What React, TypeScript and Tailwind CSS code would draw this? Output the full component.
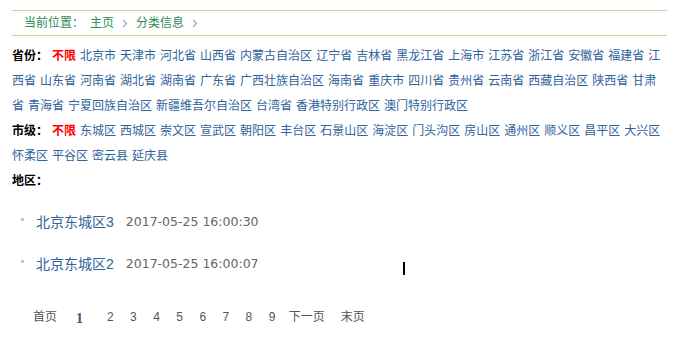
import React from 'react'

const provinces = [
  '北京市', '天津市', '河北省', '山西省', '内蒙古自治区', '辽宁省', '吉林省', '黑龙江省', '上海市', '江苏省',
  '浙江省', '安徽省', '福建省', '江西省', '山东省', '河南省', '湖北省', '湖南省', '广东省', '广西壮族自治区',
  '海南省', '重庆市', '四川省', '贵州省', '云南省', '西藏自治区', '陕西省', '甘肃省', '青海省', '宁夏回族自治区',
  '新疆维吾尔自治区', '台湾省', '香港特别行政区', '澳门特别行政区',
]

const districts = [
  '东城区', '西城区', '崇文区', '宣武区', '朝阳区', '丰台区', '石景山区', '海淀区', '门头沟区', '房山区',
  '通州区', '顺义区', '昌平区', '大兴区', '怀柔区', '平谷区', '密云县', '延庆县',
]

const posts = [
  { title: '北京东城区3', time: '2017-05-25 16:00:30' },
  { title: '北京东城区2', time: '2017-05-25 16:00:07' },
]

const Chevron = () => (
  <svg width="6" height="9" viewBox="0 0 6 9" className="mx-[8px] inline-block">
    <polyline points="1,1 4.5,4.5 1,8" fill="none" stroke="#9db0c8" strokeWidth="1.4" />
  </svg>
)

// 省份 / 市级 这种筛选行
const FilterRow = (props: { label: string; items?: string[] }) => (
  <div className="leading-[25px] text-[12px]">
    <span className="mr-[4px] font-bold text-black">{props.label}：</span>
    {props.items && <span className="mr-[4px] font-bold text-[#ff0000]">不限</span>}
    {props.items?.map((item) => (
      <a href="#" key={item} className="mr-[4px] text-[#2f639c]">
        {item}
      </a>
    ))}
  </div>
)

export default function App() {
  return (
    <div className="relative h-[350px] w-[673px] bg-white font-['Liberation_Sans','Noto_Sans_CJK_SC',sans-serif]">
      <div className="ml-[12px] w-[655px] pt-[10px]">
        <div className="flex h-[26px] items-center border-y border-[#cfcf96] pl-[12px] text-[12px] text-[#2b8c54]">
          <span>当前位置：</span>
          <a href="#" className="ml-[6px]">主页</a>
          <Chevron />
          <a href="#">分类信息</a>
          <Chevron />
        </div>

        <div className="pt-[7.5px]">
          <FilterRow label="省份" items={provinces} />
          <FilterRow label="市级" items={districts} />
          <FilterRow label="地区" />
        </div>

        <ul className="mt-[8px]">
          {posts.map((post) => (
            <li key={post.title} className="flex h-[42px] items-center pl-[9px]">
              <span className="mb-[6px] h-[3px] w-[3px] bg-[#c8c8c8]" />
              <a href="#" className="ml-[12px] text-[14px] text-[#2f639c]">{post.title}</a>
              <span className="ml-[12px] font-['DejaVu_Sans',sans-serif] text-[12.5px] text-[#666]">{post.time}</span>
            </li>
          ))}
        </ul>

        <div className="mt-[19px] flex h-[24px] items-center text-[12px] text-[#555]">
          <a href="#" className="ml-[21px]">首页</a>
          <span className="ml-[19px] mt-[3px] font-['Liberation_Serif',serif] text-[14px] font-bold">1</span>
          <div className="ml-[24px] flex">
            {['2', '3', '4', '5', '6', '7', '8', '9'].map((n) => (
              <a href="#" key={n} className="w-[23.1px]">{n}</a>
            ))}
          </div>
          <a href="#" className="ml-[-3px]">下一页</a>
          <a href="#" className="ml-[16px]">末页</a>
        </div>
      </div>

      {/* text cursor */}
      <div className="absolute left-[403px] top-[262px] h-[13px] w-[1.5px] bg-black" />
    </div>
  )
}
